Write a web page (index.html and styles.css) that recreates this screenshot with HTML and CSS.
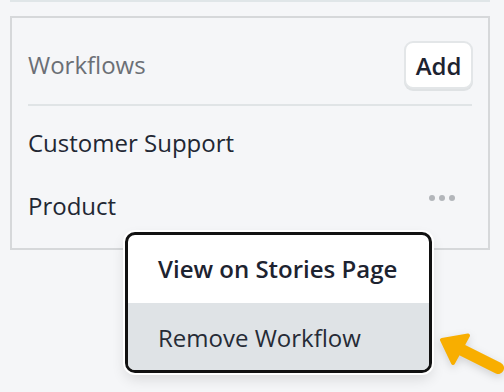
FILE: index.html
```html
<!DOCTYPE html>
<html lang="en">
<head>
    <meta charset="UTF-8">
    <meta name="viewport" content="width=device-width, initial-scale=1.0">
    <title>Workflows</title>
    <link rel="stylesheet" href="styles.css">
</head>
<body>
    <div class="top-rule"></div>

    <!-- Workflows panel -->
    <div class="panel">
        <div class="panel-header">
            <span class="panel-title">Workflows</span>
            <button class="add-btn">Add</button>
        </div>
        <ul class="workflow-list">
            <li class="workflow-row">Customer Support</li>
            <li class="workflow-row">
                <span>Product</span>
                <svg class="more" width="26" height="6" viewBox="0 0 26 6">
                    <circle cx="3" cy="3" r="3" fill="#b3b6ba"/>
                    <circle cx="13" cy="3" r="3" fill="#b3b6ba"/>
                    <circle cx="23" cy="3" r="3" fill="#b3b6ba"/>
                </svg>
            </li>
        </ul>
    </div>

    <!-- Context menu -->
    <div class="menu">
        <div class="menu-item menu-item-strong">View on Stories Page</div>
        <div class="menu-item menu-item-active">Remove Workflow</div>
    </div>

    <!-- Pointer arrow -->
    <svg class="arrow" width="74" height="67" viewBox="0 0 74 67">
        <line x1="31" y1="24.5" x2="68" y2="43" stroke="#f8ae00" stroke-width="12" stroke-linecap="round"/>
        <polygon points="12,15 38,10.5 23,38" fill="#f8ae00" stroke="#f8ae00" stroke-width="4" stroke-linejoin="round"/>
    </svg>
</body>
</html>
```

FILE: styles.css
```css
/* General Styles */
body {
    font-family: "Open Sans", "Noto Sans", sans-serif;
    margin: 0;
    padding: 0;
    background-color: #f5f6f8;
    color: #1d2330;
    height: 392px;
    overflow: hidden;
    position: relative;
}

.top-rule {
    margin: 0 14px 0 10px;
    height: 2px;
    background-color: #e0e6e8;
}

/* Panel */
.panel {
    margin: 14px 0 0 10px;
    width: 480px;
    box-sizing: border-box;
    border: 2px solid #d6d8da;
    padding: 0 16px 11px;
}

.panel-header {
    display: flex;
    justify-content: space-between;
    align-items: center;
    padding: 23px 0 15px;
    border-bottom: 2px solid #e0e4e6;
}

.panel-title {
    font-size: 24px;
    line-height: 32px;
    color: #6b6f75;
}

.add-btn {
    font-family: inherit;
    font-size: 24px;
    font-weight: 600;
    color: #1d2330;
    background-color: #fff;
    border: 2px solid #e3e6e8;
    border-radius: 9px;
    height: 48px;
    width: 69px;
    padding: 0;
    margin-right: -1px;
    box-shadow: 0 2px 0 #dfe2e4;
    cursor: pointer;
}

/* List */
.workflow-list {
    list-style: none;
    margin: 0;
    padding: 5px 0 0;
}

.workflow-row {
    display: flex;
    justify-content: space-between;
    align-items: flex-start;
    font-size: 24px;
    line-height: 32px;
    padding: 15.5px 0;
    color: #222733;
}

.more {
    margin: 5px 17px 0 0;
}

/* Menu */
.menu {
    position: absolute;
    left: 125px;
    top: 232px;
    width: 307px;
    height: 141px;
    box-sizing: border-box;
    border: 3px solid #111;
    border-radius: 10px;
    background-color: #fff;
    overflow: hidden;
    box-shadow: 0 0 0 2px #fff, 0 6px 14px rgba(0, 0, 0, 0.12);
}

.menu-item {
    font-size: 24px;
    line-height: 32px;
    padding: 0 30px;
    color: #262b36;
    box-sizing: border-box;
}

.menu-item-strong {
    font-weight: 600;
    color: #1d2330;
    height: 68px;
    padding-top: 18px;
}

.menu-item-active {
    background-color: #dfe3e6;
    height: 67px;
    padding-top: 19px;
}

/* Arrow */
.arrow {
    position: absolute;
    left: 430px;
    top: 325px;
    filter: drop-shadow(0 3px 4px rgba(0, 0, 0, 0.15));
}
```
